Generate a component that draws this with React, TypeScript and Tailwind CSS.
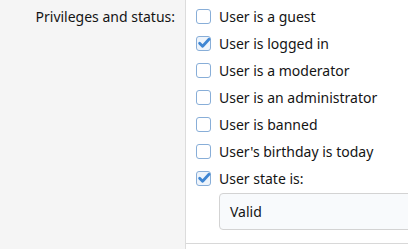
import React from 'react';

const options = [
  { label: 'User is a guest', checked: false },
  { label: 'User is logged in', checked: true },
  { label: 'User is a moderator', checked: false },
  { label: 'User is an administrator', checked: false },
  { label: 'User is banned', checked: false },
  { label: "User's birthday is today", checked: false },
  { label: 'User state is:', checked: true },
];

const Checkbox = ({ checked }: { checked: boolean }) => (
  <span
    className={`relative flex h-[15px] w-[15px] shrink-0 items-center justify-center rounded-[3px] border-[1.5px] border-[#88aed8] ${
      checked ? 'bg-[#eef4fb]' : 'bg-white'
    }`}
  >
    {checked && (
      <svg viewBox="0 0 14 14" className="absolute left-[0px] top-[-1px] h-[14px] w-[14px]">
        <path d="M2.6 7.2 L5.6 10.3 L12 3.2" fill="none" stroke="#3f86d3" strokeWidth={2.8} strokeLinecap="round" strokeLinejoin="round" />
      </svg>
    )}
  </span>
);

const App: React.FC = () => {
  return (
    <div className="flex h-[249px] w-[408px] overflow-hidden bg-white font-['Segoe_UI','Noto_Sans',sans-serif] text-[14px] text-[#141414]">
      <div className="flex w-[186px] shrink-0 justify-end border-r border-[#dcdcdc] bg-[#f5f5f5] pr-[10px] pt-[3px]">
        <div className="flex h-[27px] items-center">Privileges and status:</div>
      </div>
      <div className="flex min-w-0 flex-1 flex-col">
        <div className="flex flex-col border-b border-[#d8d8d8] pb-[13px] pl-[10px] pt-[3px]">
          {options.map((o) => (
            <label key={o.label} className="flex h-[27px] items-center gap-[8px] whitespace-nowrap">
              <Checkbox checked={o.checked} />
              <span>{o.label}</span>
            </label>
          ))}
          <div className="ml-[23px] mt-[1px] flex h-[37px] w-[220px] items-center rounded-[4px] border border-[#d3d3d3] bg-[#f8fafc] pl-[10px]">
            Valid
          </div>
        </div>
      </div>
    </div>
  );
};

export default App;
